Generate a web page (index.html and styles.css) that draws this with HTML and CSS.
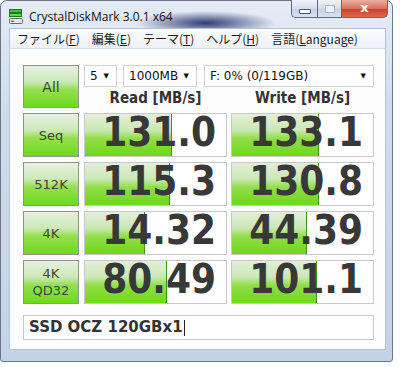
FILE: index.html
```html
<!DOCTYPE html>
<html>
<head>
  <title>CrystalDiskMark 3.0.1 x64</title>
  <link rel="stylesheet" href="styles.css">
</head>
<body>
  <div class="window">
    <div class="titlebar">
      <div class="title">
        <svg class="appIcon" width="14" height="15" viewBox="0 0 14 15">
          <rect x="0.5" y="0.5" width="12" height="3" fill="#3cc43c" stroke="#1e7a1e"/>
          <rect x="0.5" y="4.5" width="12" height="3" fill="#5ad85a" stroke="#1e7a1e"/>
          <rect x="0.5" y="9.5" width="13" height="5" rx="1" fill="#e4e4e4" stroke="#6a6a6a"/>
          <rect x="2" y="11.5" width="3" height="1.5" fill="#7a7a7a"/>
        </svg>
        <span>CrystalDiskMark 3.0.1 x64</span>
      </div>
      <div class="controls">
        <div class="ctl minBtn"><span class="dash"></span></div>
        <div class="ctl maxBtn"><span class="box"></span></div>
        <div class="ctl closeBtn">x</div>
      </div>
    </div>

    <div class="menubar">
      <span class="menuItem">ファイル(<u>F</u>)</span>
      <span class="menuItem">編集(<u>E</u>)</span>
      <span class="menuItem">テーマ(<u>T</u>)</span>
      <span class="menuItem">ヘルプ(<u>H</u>)</span>
      <span class="menuItem">言語(<u>L</u>anguage)</span>
    </div>

    <div class="client">
      <div class="bench">
        <div class="btn allBtn">All</div>
        <div class="topRight">
          <div class="selects">
            <div class="select sel5">5 <span class="arrow">&#9660;</span></div>
            <div class="select selSize">1000MB <span class="arrow">&#9660;</span></div>
            <div class="select selDrive">F: 0% (0/119GB) <span class="arrow">&#9660;</span></div>
          </div>
          <div class="heads">
            <div class="head">Read [MB/s]</div>
            <div class="head">Write [MB/s]</div>
          </div>
        </div>

        <div class="btn">Seq</div>
        <div class="cell" style="--w:61.7%">131.0</div>
        <div class="cell" style="--w:61.7%">133.1</div>

        <div class="btn">512K</div>
        <div class="cell" style="--w:60%">115.3</div>
        <div class="cell" style="--w:61.7%">130.8</div>

        <div class="btn">4K</div>
        <div class="cell" style="--w:42.5%">14.32</div>
        <div class="cell" style="--w:53%">44.39</div>

        <div class="btn twoLine">4K<br>QD32</div>
        <div class="cell" style="--w:58%">80.49</div>
        <div class="cell" style="--w:60%">101.1</div>
      </div>

      <div class="comment">SSD OCZ 120GBx1<span class="caret"></span></div>
    </div>
  </div>
</body>
</html>
```

FILE: styles.css
```css
    body {
      margin: 0;
      background: #ffffff;
      font-family: "DejaVu Sans", sans-serif;
    }

    .window {
      width: 393px;
      height: 362px;
      box-sizing: border-box;
      padding: 0 6px 11px 8px;
      border: 1px solid #6c7584;
      border-radius: 7px 7px 3px 3px;
      background:
        radial-gradient(ellipse 70px 12px at 205px 22px, rgba(18, 30, 92, 0.85), rgba(18, 30, 92, 0) 100%),
        linear-gradient(to bottom, #e4ecf6 0%, #cfdcec 30%, #c3d3e6 100%);
      display: flex;
      flex-direction: column;
    }

    .titlebar {
      height: 27px;
      display: flex;
      justify-content: space-between;
      align-items: flex-start;
    }

    .title {
      display: flex;
      align-items: center;
      margin-top: 7px;
      font-family: "Open Sans", "Noto Sans", sans-serif;
      font-size: 12px;
      color: #111;
    }

    .appIcon {
      margin-right: 6px;
    }

    .controls {
      display: flex;
      margin-right: -2px;
      margin-top: -1px;
    }

    .ctl {
      height: 18px;
      box-sizing: border-box;
      border: 1px solid #5f6a7a;
      border-top: none;
      display: flex;
      align-items: center;
      justify-content: center;
      background: linear-gradient(to bottom, #eef3f9, #d3dfec 50%, #c2d2e4 51%, #d6e3f0);
    }

    .minBtn {
      width: 26px;
      border-radius: 0 0 0 5px;
      border-right: none;
    }

    .maxBtn {
      width: 25px;
    }

    .closeBtn {
      width: 46px;
      border-radius: 0 0 5px 0;
      border-left: none;
      background: linear-gradient(to bottom, #ebb0a4, #d8705d 50%, #c7402a 51%, #d9684e);
      color: #fff;
      font-weight: bold;
      font-size: 13px;
      line-height: 1;
      padding-bottom: 3px;
    }

    .dash {
      width: 10px;
      height: 3px;
      background: #fff;
      border: 1px solid #4a5566;
      border-radius: 1px;
      margin-top: 5px;
    }

    .box {
      width: 8px;
      height: 6px;
      border: 1px solid #aab6c6;
      background: #eef2f7;
    }

    .menubar {
      height: 19px;
      display: flex;
      align-items: center;
      padding-left: 1px;
      border: 1px solid #b4c2d4;
      border-bottom: none;
      background: linear-gradient(to bottom, #fbfcfe, #edf1f7);
      font-family: "Noto Sans CJK JP", sans-serif;
      font-size: 12px;
      color: #1b1b1b;
    }

    .menuItem {
      padding: 0 6px;
    }

    .menuItem u {
      text-decoration-thickness: 1px;
      text-underline-offset: 1px;
    }

    .client {
      flex: 1;
      background: #fdfdfd;
      border: 1px solid #b4c2d4;
      border-top: 1px solid #d6dde8;
      padding: 16px 0 0 13px;
    }

    .bench {
      display: grid;
      grid-template-columns: 57px 143px 143px;
      grid-template-rows: 43px 44px 44px 44px 44px;
      column-gap: 4px;
      row-gap: 5px;
    }

    .btn {
      width: 56px;
      box-sizing: border-box;
      border: 1px solid #8e968a;
      background: linear-gradient(to bottom, #e6f1de 0%, #cde9b8 38%, #94df4c 58%, #6fd91c 100%);
      display: flex;
      align-items: center;
      justify-content: center;
      text-align: center;
      font-size: 13px;
      color: #3a4a2c;
    }

    .allBtn {
      font-size: 14px;
    }

    .twoLine {
      line-height: 17px;
    }

    .topRight {
      grid-column: 2 / 4;
      display: flex;
      flex-direction: column;
    }

    .selects {
      display: flex;
      height: 22px;
    }

    .select {
      box-sizing: border-box;
      height: 22px;
      border: 1px solid #d2d2d2;
      background: #fff;
      font-size: 12px;
      color: #111;
      display: flex;
      align-items: center;
      justify-content: space-between;
      padding: 0 7px 0 5px;
    }

    .sel5 {
      width: 33px;
      margin-right: 6px;
    }

    .selSize {
      width: 74px;
      margin-right: 7px;
    }

    .selDrive {
      width: 170px;
    }

    .arrow {
      font-size: 7px;
    }

    .heads {
      display: flex;
      gap: 4px;
      flex: 1;
    }

    .head {
      width: 143px;
      text-align: center;
      font-family: "DejaVu Sans Condensed", "DejaVu Sans", sans-serif;
      font-stretch: condensed;
      font-weight: bold;
      font-size: 15px;
      color: #333;
      line-height: 19px;
      padding-top: 2px;
    }

    .cell {
      box-sizing: border-box;
      border: 1px solid #c9c9c9;
      background:
        linear-gradient(to right, transparent calc(var(--w) - 1px), #3f8f1a calc(var(--w) - 1px), #3f8f1a var(--w), transparent var(--w)),
        linear-gradient(to bottom, #e2efd9 0%, #cbe8b5 38%, #92de48 58%, #6cd818 100%) 0 0 / var(--w) 100% no-repeat,
        #ffffff;
      text-align: right;
      padding-right: 10px;
      font-family: "DejaVu Sans Condensed", "DejaVu Sans", sans-serif;
      font-stretch: condensed;
      font-weight: bold;
      font-size: 40px;
      line-height: 37px;
      color: #383838;
    }

    .comment {
      width: 351px;
      height: 25px;
      box-sizing: border-box;
      margin-top: 11px;
      border: 1px solid #c9c9c9;
      background: #fff;
      padding-left: 5px;
      font-weight: bold;
      font-size: 15px;
      line-height: 23px;
      color: #333;
      display: flex;
      align-items: center;
    }

    .caret {
      width: 1px;
      height: 16px;
      background: #222;
      margin-left: 1px;
    }
```
